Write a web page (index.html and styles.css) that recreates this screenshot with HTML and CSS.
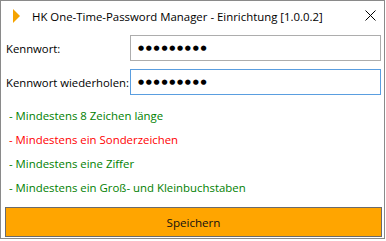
FILE: index.html
```html
<!DOCTYPE html>
<html lang="de">
<head>
<meta charset="utf-8">
<title>HK One-Time-Password Manager - Einrichtung [1.0.0.2]</title>
<link rel="stylesheet" href="styles.css">
</head>
<body>
<div class="window">
  <div class="titlebar">
    <svg class="app-icon" width="8" height="14" viewBox="0 0 8 14"><polygon points="0,0 7,7 0,14" fill="#f5a300"/></svg>
    <span class="title">HK One-Time-Password Manager - Einrichtung [1.0.0.2]</span>
    <svg class="close" width="11" height="11" viewBox="0 0 11 11"><path d="M0.5 0.5 L10.5 10.5 M10.5 0.5 L0.5 10.5" stroke="#000" stroke-width="1"/></svg>
  </div>
  <div class="content">
    <div class="row first">
      <label class="label">Kennwort:</label>
      <div class="field"><span class="mask">●●●●●●●●●</span></div>
    </div>
    <div class="row">
      <label class="label">Kennwort wiederholen:</label>
      <div class="field focused"><span class="mask">●●●●●●●●●</span></div>
    </div>
    <ul class="rules">
      <li class="ok">- Mindestens 8 Zeichen länge</li>
      <li class="bad">- Mindestens ein Sonderzeichen</li>
      <li class="ok">- Mindestens eine Ziffer</li>
      <li class="ok">- Mindestens ein Groß- und Kleinbuchstaben</li>
    </ul>
    <button class="save">Speichern</button>
  </div>
</div>
</body>
</html>
```
FILE: styles.css
```css
* { box-sizing: border-box; }
html, body { margin: 0; padding: 0; background: #ffffff; }
body {
  width: 386px;
  height: 241px;
  overflow: hidden;
  font-family: "Open Sans", "Noto Sans", sans-serif;
  font-size: 11.4px;
  color: #000;
}
.window {
  width: 385px;
  height: 239px;
  border: 1px solid #8a8a8a;
  background: #fff;
  display: flex;
  flex-direction: column;
}
.titlebar {
  height: 30px;
  display: flex;
  align-items: center;
  position: relative;
}
.app-icon { margin-left: 12px; margin-right: 11px; }
.title { font-size: 11.4px; color: #000; white-space: nowrap; }
.close { position: absolute; left: 364px; top: 9px; }
.content {
  padding: 4px 2px 1px 4px;
  display: flex;
  flex-direction: column;
}
.row {
  display: flex;
  align-items: center;
  height: 26px;
  margin-bottom: 8px;
}
.label { width: 125px; padding-left: 1px; white-space: nowrap; font-size: 11.3px; }
.field {
  width: 251px;
  height: 26px;
  border: 1px solid #adadad;
  display: flex;
  align-items: center;
  padding-left: 7px;
}
.field.focused { border-color: #5a9ee0; }
.mask {
  font-family: "DejaVu Sans", sans-serif;
  font-size: 7px;
  letter-spacing: 1.7px;
  line-height: 1;
}
.rules {
  list-style: none;
  margin: 1px 0 0 0;
  padding: 0 0 0 4px;
}
.rules li { height: 24px; line-height: 24px; white-space: nowrap; }
.ok { color: #008000; }
.bad { color: #ff0000; }
.save {
  margin-top: 7px;
  width: 377px;
  height: 30px;
  background: #ffa500;
  border: 1px solid #6b6b6b;
  font-family: inherit;
  font-size: 11.6px;
  color: #111;
  padding: 0;
}
```
